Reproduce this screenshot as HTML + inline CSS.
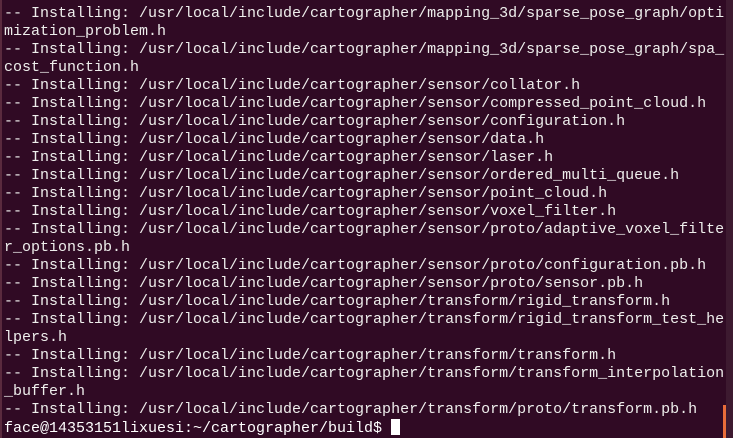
<!DOCTYPE html>
<html><head><meta charset="utf-8"><style>
html,body{margin:0;padding:0;}
body{width:733px;height:438px;background:#300a24;position:relative;overflow:hidden;}
.lb{position:absolute;left:0;top:0;width:2px;height:438px;background:#5a2a3e;}
.sb{position:absolute;left:726px;top:0;width:7px;height:438px;background:#3d1a30;}
.th{position:absolute;left:723px;top:405px;width:3px;height:33px;background:#e96d3a;}
pre{position:absolute;left:4px;top:5px;margin:0;font-family:"Liberation Mono",monospace;font-size:15px;line-height:18px;color:#eeeeec;letter-spacing:0;}
.cur{display:inline-block;width:9px;height:16px;background:#fff;vertical-align:-3px;}
</style></head><body>
<div class="lb"></div><div class="sb"></div><div class="th"></div>
<pre>-- Installing: /usr/local/include/cartographer/mapping_3d/sparse_pose_graph/opti
mization_problem.h
-- Installing: /usr/local/include/cartographer/mapping_3d/sparse_pose_graph/spa_
cost_function.h
-- Installing: /usr/local/include/cartographer/sensor/collator.h
-- Installing: /usr/local/include/cartographer/sensor/compressed_point_cloud.h
-- Installing: /usr/local/include/cartographer/sensor/configuration.h
-- Installing: /usr/local/include/cartographer/sensor/data.h
-- Installing: /usr/local/include/cartographer/sensor/laser.h
-- Installing: /usr/local/include/cartographer/sensor/ordered_multi_queue.h
-- Installing: /usr/local/include/cartographer/sensor/point_cloud.h
-- Installing: /usr/local/include/cartographer/sensor/voxel_filter.h
-- Installing: /usr/local/include/cartographer/sensor/proto/adaptive_voxel_filte
r_options.pb.h
-- Installing: /usr/local/include/cartographer/sensor/proto/configuration.pb.h
-- Installing: /usr/local/include/cartographer/sensor/proto/sensor.pb.h
-- Installing: /usr/local/include/cartographer/transform/rigid_transform.h
-- Installing: /usr/local/include/cartographer/transform/rigid_transform_test_he
lpers.h
-- Installing: /usr/local/include/cartographer/transform/transform.h
-- Installing: /usr/local/include/cartographer/transform/transform_interpolation
_buffer.h
-- Installing: /usr/local/include/cartographer/transform/proto/transform.pb.h
<span style="color:#fff">face@14353151lixuesi:~/cartographer/build$ </span><span class="cur"></span></pre>
</body></html>
